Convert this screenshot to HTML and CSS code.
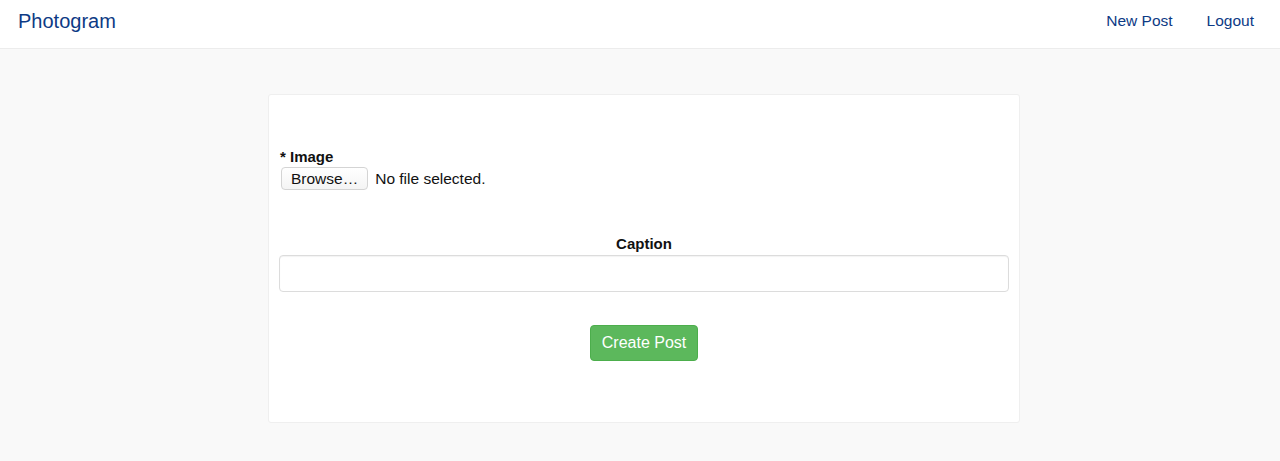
FILE: index.html
```html
<!DOCTYPE html>
<html lang="en">
<head>
<meta charset="utf-8">
<title>Photogram</title>
<link rel="stylesheet" href="styles.css">
</head>
<body>
<header class="navbar">
  <a class="brand" href="#">Photogram</a>
  <nav class="nav">
    <a href="#">New Post</a>
    <a href="#">Logout</a>
  </nav>
</header>
<main class="page">
  <div class="card">
    <form class="form">
      <div class="field field-file">
        <label class="label">* Image</label>
        <div class="file-row">
          <button type="button" class="browse">Browse…</button>
          <span class="file-status">No file selected.</span>
        </div>
      </div>
      <div class="field field-caption">
        <label class="label label-center">Caption</label>
        <input class="text-input" type="text">
      </div>
      <div class="actions">
        <button type="button" class="btn-success">Create Post</button>
      </div>
    </form>
  </div>
</main>
</body>
</html>
```
FILE: styles.css
```css
* { box-sizing: border-box; }
html, body { margin: 0; padding: 0; }
body {
  background: #f9f9f9;
  font-family: "Liberation Sans", Arial, sans-serif;
  color: #111;
  min-height: 461px;
}
.navbar {
  height: 49px;
  background: #fff;
  border-bottom: 1px solid #ececec;
  display: flex;
  align-items: center;
  justify-content: space-between;
  padding: 0 26px 0 18px;
}
.brand {
  font-size: 20px;
  color: #0d3a85;
  text-decoration: none;
  margin-top: -6px;
}
.nav {
  display: flex;
  gap: 34px;
  margin-top: -6px;
}
.nav a {
  font-size: 15.5px;
  color: #0d3a85;
  text-decoration: none;
}
.page {
  padding: 45px 0 0 8px;
}
.card {
  width: 752px;
  margin: 0 auto;
  background: #fff;
  border: 1px solid #efefef;
  border-radius: 3px;
  padding: 52px 10px 61px;
}
.form { display: flex; flex-direction: column; }
.label {
  display: block;
  font-weight: bold;
  font-size: 15px;
  line-height: 20px;
  padding-left: 1px;
}
.label-file { font-size: 15.5px; }
.label-center { text-align: center; padding-left: 0; }
.file-row {
  display: flex;
  align-items: center;
  gap: 7px;
  margin-top: 0;
  padding-left: 2px;
}
.browse {
  font-family: inherit;
  font-size: 15.5px;
  height: 23px;
  padding: 0 9px;
  background: linear-gradient(#ffffff, #f4f4f4);
  border: 1px solid #d4d4d4;
  border-radius: 4px;
  color: #111;
  line-height: 21px;
}
.file-status {
  font-size: 15.5px;
  color: #111;
}
.field-caption {
  margin-top: 44px;
}
.text-input {
  display: block;
  width: 100%;
  height: 37px;
  margin-top: 1px;
  border: 1px solid #dcdcdc;
  border-radius: 4px;
  box-shadow: inset 0 1px 1px rgba(0,0,0,0.05);
  background: #fff;
}
.actions {
  display: flex;
  justify-content: center;
  margin-top: 33px;
}
.btn-success {
  font-family: inherit;
  font-size: 16px;
  color: #fff;
  background: #5cb85c;
  border: 1px solid #4cae4c;
  border-radius: 4px;
  height: 36px;
  padding: 0 11px;
}
```
